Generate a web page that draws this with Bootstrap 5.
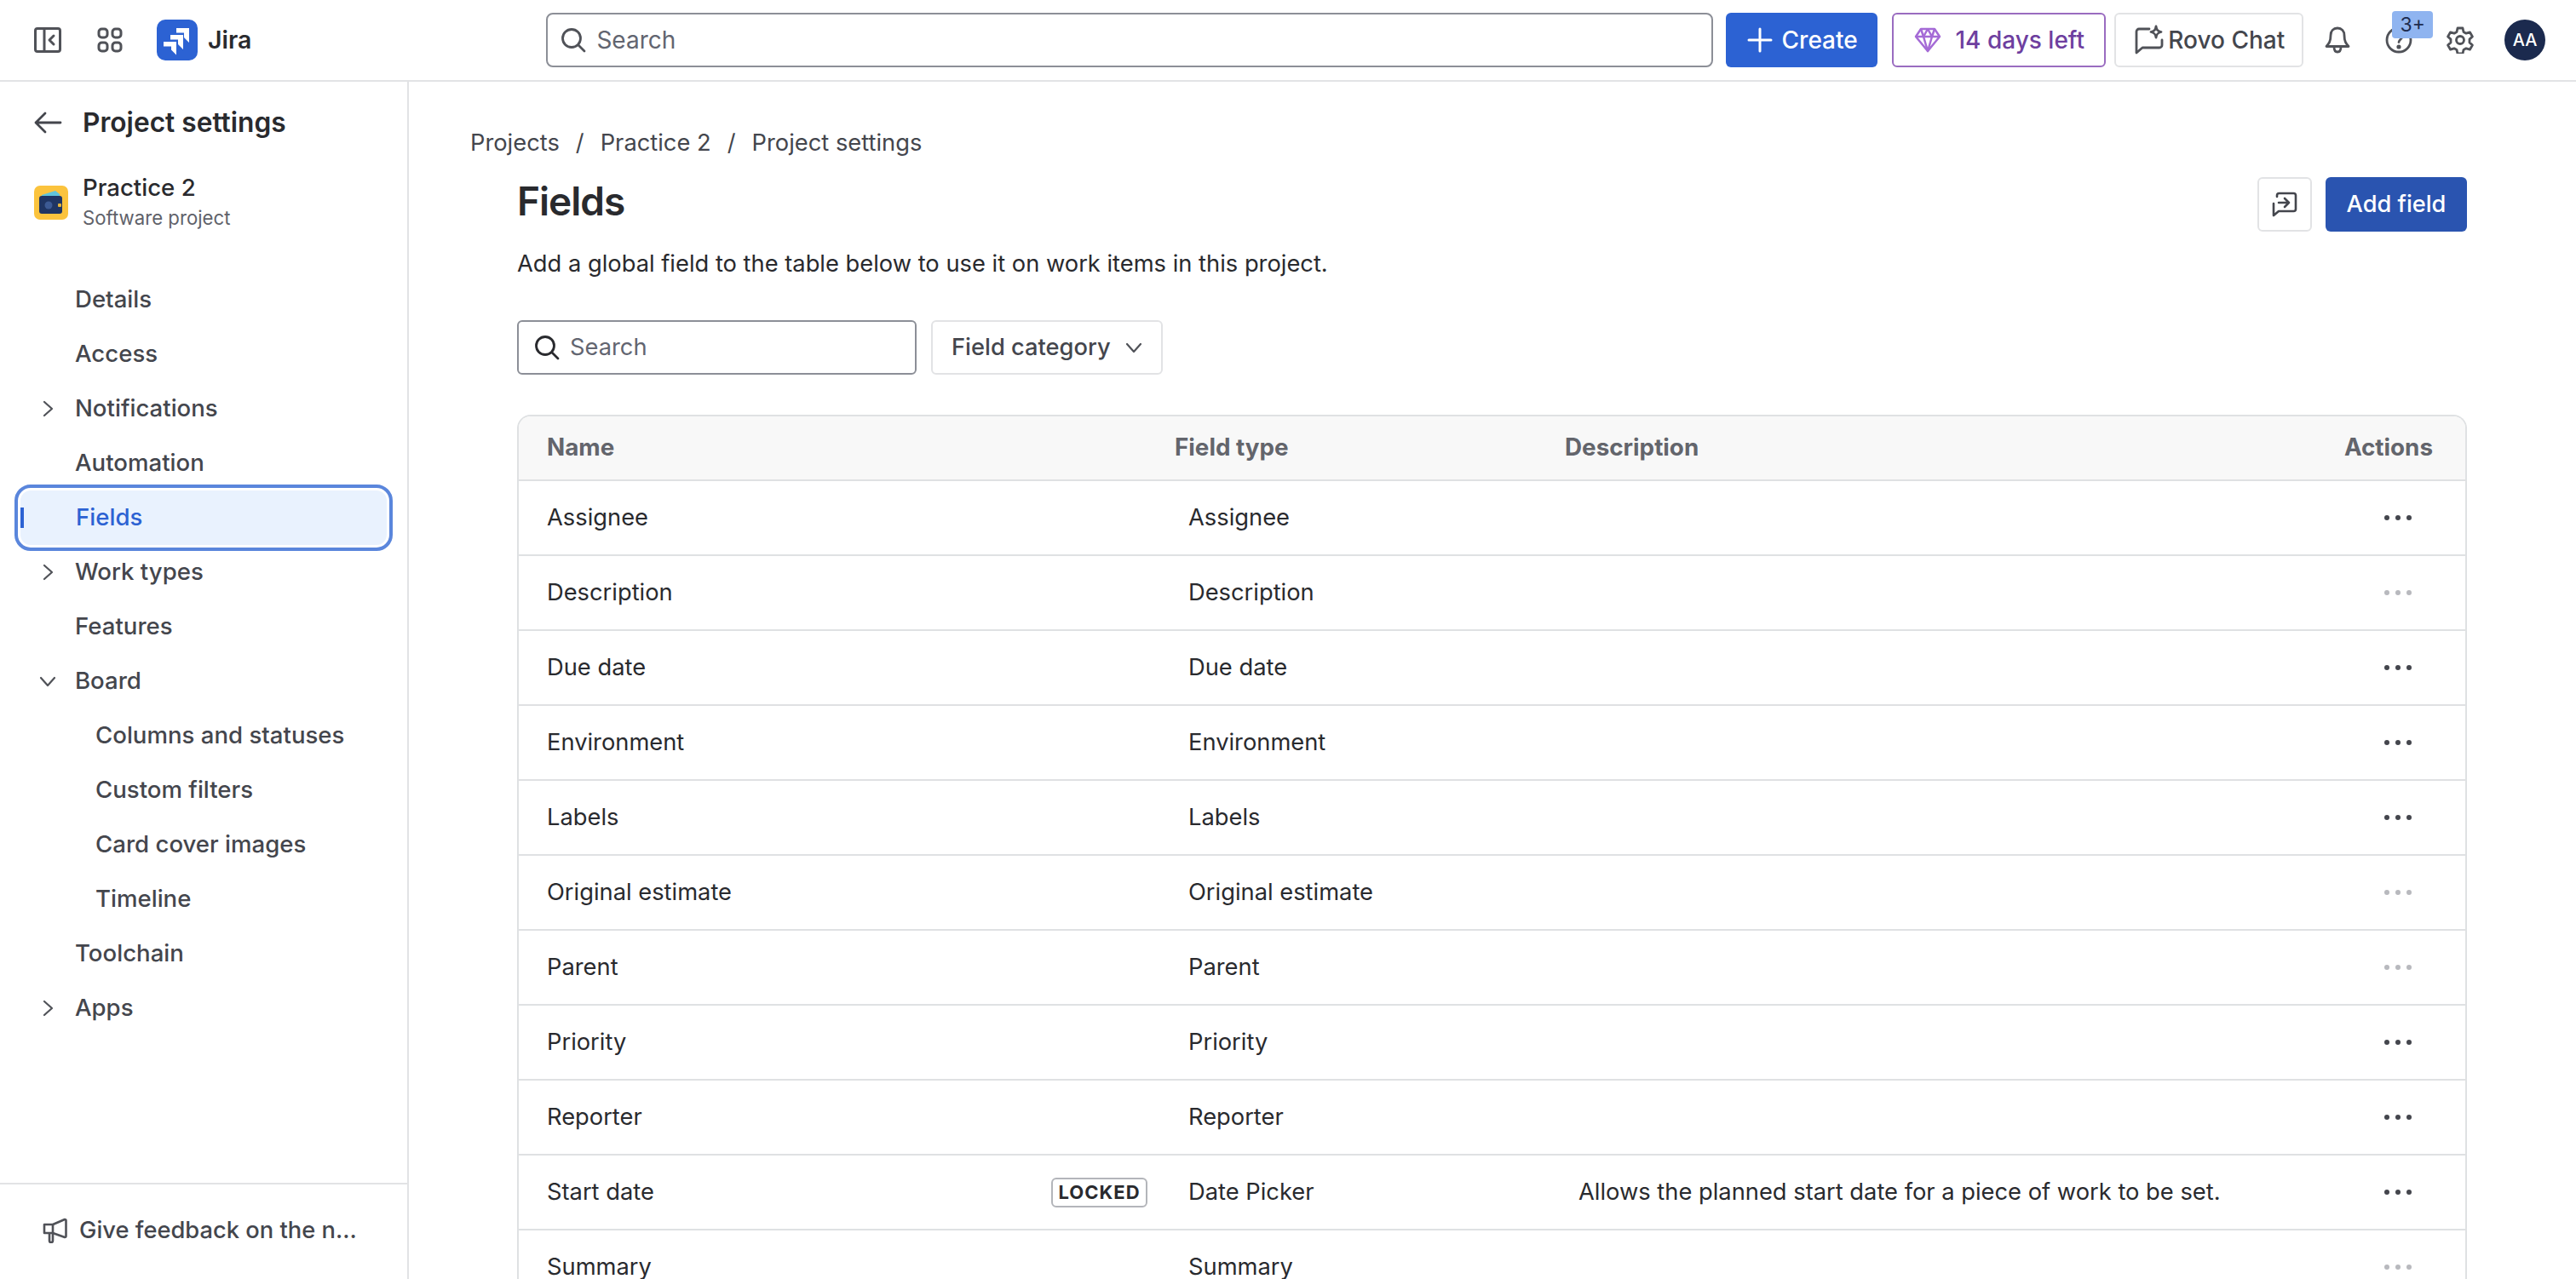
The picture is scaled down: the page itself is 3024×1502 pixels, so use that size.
<!DOCTYPE html>
<html lang="en">
<head>
    <meta charset="UTF-8">
    <title>Fields - Project settings - Jira</title>
    <link href="https://cdn.jsdelivr.net/npm/bootstrap@5.3.0/dist/css/bootstrap.min.css" rel="stylesheet">
    <style>
        html, body { height: 100%; }
        body {
            font-family: "Inter", "Liberation Sans", sans-serif;
            font-size: 27.3px;
            color: #292a2e;
            overflow: hidden;
        }
        svg { flex-shrink: 0; display: block; }

        .topbar { height: 96px; border-bottom: 2px solid #e2e3e5; padding: 0 36px 0 40px; }
        .logo-wrap { margin-left: 40px; }
        .apps-wrap { margin-left: 42px; }
        .logo-text { font-size: 28.5px; font-weight: 600; margin-left: 12px; }
        .global-search { width: 1370px; height: 64px; margin-left: 346px; border: 2px solid #8c8f97; border-radius: 8px; padding: 0 15px; color: #626570; font-size: 28px; }
        .tb-btn { height: 64px; border-radius: 6px; font-size: 28px; font-weight: 500; display: flex; align-items: center; padding: 0; }
        .btn-create { width: 179px; margin-left: 15px; background: #2c62d3; color: #fff; gap: 11px; padding-left: 24px; }
        .btn-create:hover { background: #2c62d3; color: #fff; }
        .btn-trial { width: 251px; margin-left: 17px; border: 2px solid #9a6cc0; color: #6e3f9f; gap: 16px; padding-left: 24px; }
        .btn-rovo { width: 222px; margin-left: 10px; border: 2px solid #e2e3e5; color: #44464d; gap: 5px; padding-left: 22px; }
        .tb-icon { width: 72px; height: 64px; display: flex; align-items: center; justify-content: center; position: relative; }
        .tb-icon.first-icon { margin-left: 4px; }
        .notif-count { position: absolute; left: 28px; top: -2px; width: 48px; height: 32px; background: #8fb4f0; border-radius: 4px; font-size: 23px; line-height: 32px; text-align: center; color: #1e2c4f; }
        .user-avatar { width: 48px; height: 48px; border-radius: 50%; background: #1b2a4e; color: #fff; font-size: 20px; font-weight: 500; display: flex; align-items: center; justify-content: center; margin-left: 16px; }

        .app-body { height: calc(100% - 96px); }
        .side-panel { width: 480px; border-right: 2px solid #e2e3e5; flex-shrink: 0; }
        .side-title { height: 96px; padding-left: 40px; font-size: 31.7px; font-weight: 600; gap: 24px; }
        .side-project { padding-left: 40px; gap: 17px; height: 76px; margin-top: 8px; }
        .proj-icon { width: 40px; height: 40px; }
        .proj-name { font-size: 27.6px; font-weight: 500; line-height: 36px; }
        .proj-type { font-size: 22.2px; color: #5f626a; line-height: 36px; }
        .side-nav { padding: 0 18px; margin-top: 44px; }
        .side-link { height: 64px; display: flex; align-items: center; color: #44464d; font-size: 27.6px; font-weight: 500; padding: 0 0 0 70px; position: relative; }
        .side-link:hover { color: #44464d; }
        .side-link.sub-link { padding-left: 94px; }
        .side-link svg { position: absolute; left: 27px; top: 21px; }
        .side-link.is-current { color: #2c62d3; background: #e9f2fe; border-radius: 12px; outline: 4px solid #5a86dc; outline-offset: 3px; margin: 0 6px; padding-left: 65px; }
        .side-link.is-current::before { content: ""; position: absolute; left: 0; top: 20px; width: 4px; height: 24px; background: #2c62d3; }
        .side-foot { height: 113px; border-top: 2px solid #e2e3e5; padding-left: 50px; color: #44464d; font-weight: 500; gap: 14px; padding-bottom: 3px; }

        .main-area { padding: 54px 128px 0 72px; min-width: 0; }
        .crumbs { color: #44464d; line-height: 36px; }
        .crumbs .sep { margin: 0 19px; }
        .page-wrap { padding-left: 55px; }
        .page-title { font-size: 46px; font-weight: 600; letter-spacing: -1px; line-height: 64px; margin: 0; }
        .page-head { margin-top: 18px; }
        .page-desc { margin: 24px 0 0; line-height: 36px; }
        .head-actions { margin-top: 4px; }
        .btn-side { width: 64px; height: 64px; border: 2px solid #e2e3e5; border-radius: 6px; display: flex; align-items: center; justify-content: center; padding: 0; }
        .btn-add { width: 166px; height: 64px; background: #2a54b0; color: #fff; font-size: 27.2px; font-weight: 500; border-radius: 6px; padding: 0; margin-left: 16px; }
        .btn-add:hover { background: #2a54b0; color: #fff; }
        .filter-row { margin-top: 48px; gap: 17px; }
        .field-search { width: 469px; height: 64px; border: 2px solid #8c8f97; border-radius: 6px; padding: 0 18px; color: #626570; gap: 12px; }
        .btn-cat { width: 272px; height: 64px; border: 2px solid #e2e3e5; border-radius: 6px; color: #44464d; font-size: 27.3px; font-weight: 500; gap: 16px; display: flex; align-items: center; padding: 0 0 0 22px; }

        .fields-wrap { margin-top: 47px; border: 2px solid #dfe1e3; border-bottom: 0; border-radius: 16px 16px 0 0; overflow: hidden; }
        .fields-table { margin: 0; table-layout: fixed; width: 100%; --bs-table-color: #292a2e; font-size: 27.3px; }
        .fields-table th { height: 75px; background: #f8f8f8; color: #63656c; font-weight: 700; border-bottom: 2px solid #dfe1e3; padding: 0; vertical-align: middle; font-size: 27.8px; box-shadow: none; }
        .fields-table td { height: 88px; border-bottom: 2px solid #dfe1e3; padding: 0; vertical-align: middle; }
        .col-name { width: 770px; }
        .col-type { width: 458px; }
        .col-act { width: 156px; }
        .pad-name { padding-left: 33px !important; }
        .pad-type { padding-left: 16px !important; }
        .pad-desc { padding-left: 16px !important; }
        .th-act { text-align: right; padding-right: 38px !important; }
        .name-cell { display: flex; align-items: center; justify-content: space-between; padding-right: 32px; }
        .tag-locked { height: 35px; width: 113px; border: 2px solid #b3b5ba; border-radius: 6px; font-size: 22px; font-weight: 700; letter-spacing: 1px; line-height: 31px; text-align: center; }
        .dot-row { display: flex; gap: 7px; justify-content: center; width: 32px; margin-left: 61px; }
        .dot-row i { width: 6px; height: 6px; border-radius: 50%; background: #44464d; display: block; }
        .dot-row.is-off i { background: #b8b9be; }
    </style>
</head>
<body>
    <header class="topbar d-flex align-items-center">
        <!-- sidebar toggle -->
        <svg width="32" height="30" viewBox="0 0 32 30" fill="none" stroke="#505258" stroke-width="3"><rect x="1.500" y="1.500" width="29" height="27" rx="2.500"/><path d="M12 2v26"/><path d="M23 10l-5 5 5 5" stroke-linecap="round" stroke-linejoin="round"/></svg>
        <svg class="apps-wrap" width="30" height="30" viewBox="0 0 30 30" fill="none" stroke="#505258" stroke-width="3"><rect x="2" y="2" width="10" height="10" rx="3.500"/><rect x="18" y="2" width="10" height="10" rx="3.500"/><rect x="2" y="18" width="10" height="10" rx="3.500"/><rect x="18" y="18" width="10" height="10" rx="3.500"/></svg>
        <svg class="logo-wrap" width="48" height="48" viewBox="0 0 48 48"><rect width="48" height="48" rx="10" fill="#2c62d3"/><path fill="#fff" d="M23 10h15v17l-6-6v-5.500H23zM16 18h15v17l-6-6v-5.500h-9zM8 26h15v15.500l-6-6V31.500H8z"/></svg>
        <span class="logo-text">Jira</span>

        <div class="global-search d-flex align-items-center gap-2">
            <svg width="30" height="30" viewBox="0 0 30 30" fill="none" stroke="#505258" stroke-width="2.800"><circle cx="13" cy="13" r="10.500"/><path d="M21 21l7 7" stroke-linecap="round"/></svg>
            <span class="ms-1">Search</span>
        </div>
        <button class="btn tb-btn btn-create">
            <svg width="30" height="30" viewBox="0 0 30 30" stroke="#fff" stroke-width="3" stroke-linecap="round"><path d="M15 2v26M2 15h26"/></svg>
            Create
        </button>
        <button class="btn tb-btn btn-trial">
            <svg width="32" height="30" viewBox="0 0 32 30" fill="none" stroke="#a56bd6" stroke-width="2.500" stroke-linejoin="round"><path d="M8 2h16l6 9-14 17L2 11z"/><path d="M2 11h28M11 11l5 17 5-17M8 2l3 9M24 2l-3 9M16 2l-5 9M16 2l5 9"/></svg>
            14 days left
        </button>
        <button class="btn tb-btn btn-rovo">
            <svg width="34" height="36" viewBox="0 0 34 36" fill="none" stroke="#505258" stroke-width="2.800" stroke-linejoin="round"><path d="M17 5H5a3 3 0 0 0-3 3v25l7-6h20a3 3 0 0 0 3-3v-6" stroke-linecap="round"/><path d="M25 2c.6 4 1.800 5.400 6 6.500-4.200 1-5.400 2.500-6 6.500-.6-4-1.800-5.500-6-6.500 4.200-1.100 5.400-2.500 6-6.500z"/></svg>
            Rovo Chat
        </button>
        <div class="tb-icon first-icon">
            <svg width="30" height="32" viewBox="0 0 30 32" fill="none" stroke="#505258" stroke-width="2.800" stroke-linejoin="round"><path d="M15 2c-5 0-8 3.500-8 8.500 0 7-2 9.500-5 13h26c-3-3.500-5-6-5-13C23 5.500 20 2 15 2z"/><path d="M11 24c0 4 1.500 6 4 6s4-2 4-6"/></svg>
        </div>
        <div class="tb-icon">
            <svg width="32" height="32" viewBox="0 0 32 32" fill="none" stroke="#505258" stroke-width="2.800"><circle cx="16" cy="16" r="14"/><path d="M12 12c0-2.500 2-4 4-4s4 1.500 4 4c0 3-4 3.500-4 6.500" stroke-linecap="round"/><circle cx="16" cy="24" r="1.200" fill="#505258"/></svg>
            <span class="notif-count">3+</span>
        </div>
        <div class="tb-icon">
            <svg width="32" height="32" viewBox="0 0 32 32" fill="none" stroke="#505258" stroke-width="2.800" stroke-linejoin="round"><path d="M13 2h6l1 4.500 3 1.700 4.400-1.400 3 5.200-3.400 3.100v3.800l3.400 3.100-3 5.200-4.400-1.400-3 1.700-1 4.500h-6l-1-4.500-3-1.700-4.400 1.400-3-5.200 3.400-3.100v-3.800L1.600 12l3-5.200L9 8.200l3-1.700z"/><circle cx="16" cy="16" r="4.500"/></svg>
        </div>
        <div class="user-avatar">AA</div>
    </header>

    <div class="app-body d-flex">
        <aside class="side-panel d-flex flex-column">
            <div class="side-title d-flex align-items-center">
                <svg width="33" height="26" viewBox="0 0 33 26" fill="none" stroke="#44464d" stroke-width="2.800" stroke-linecap="round" stroke-linejoin="round"><path d="M31 13H2M13 2L2 13l11 11"/></svg>
                <span>Project settings</span>
            </div>
            <div class="side-project d-flex align-items-center">
                <svg class="proj-icon" viewBox="0 0 40 40"><rect width="40" height="40" rx="7" fill="#fbc33d"/><path d="M9 11l16-5 5 4v4H9z" fill="#5fc4dc"/><rect x="6" y="12" width="27" height="21" rx="3" fill="#1f3563"/><circle cx="17" cy="23" r="4.500" fill="#3c5a94"/><rect x="28" y="21" width="4" height="4" rx="1" fill="#e4b43a"/></svg>
                <div>
                    <div class="proj-name">Practice 2</div>
                    <div class="proj-type">Software project</div>
                </div>
            </div>
            <nav class="side-nav flex-grow-1">
                <a class="side-link text-decoration-none" href="#">Details</a>
                <a class="side-link text-decoration-none" href="#">Access</a>
                <a class="side-link text-decoration-none" href="#"><svg width="22" height="22" viewBox="0 0 22 22" fill="none" stroke="#505258" stroke-width="2.200" stroke-linecap="round" stroke-linejoin="round"><path d="M7 3l9 8-9 8"/></svg>Notifications</a>
                <a class="side-link text-decoration-none" href="#">Automation</a>
                <a class="side-link text-decoration-none is-current" href="#">Fields</a>
                <a class="side-link text-decoration-none" href="#"><svg width="22" height="22" viewBox="0 0 22 22" fill="none" stroke="#505258" stroke-width="2.200" stroke-linecap="round" stroke-linejoin="round"><path d="M7 3l9 8-9 8"/></svg>Work types</a>
                <a class="side-link text-decoration-none" href="#">Features</a>
                <a class="side-link text-decoration-none" href="#"><svg width="22" height="22" viewBox="0 0 22 22" fill="none" stroke="#505258" stroke-width="2.200" stroke-linecap="round" stroke-linejoin="round"><path d="M3 7l8 9 8-9"/></svg>Board</a>
                <a class="side-link sub-link text-decoration-none" href="#">Columns and statuses</a>
                <a class="side-link sub-link text-decoration-none" href="#">Custom filters</a>
                <a class="side-link sub-link text-decoration-none" href="#">Card cover images</a>
                <a class="side-link sub-link text-decoration-none" href="#">Timeline</a>
                <a class="side-link text-decoration-none" href="#">Toolchain</a>
                <a class="side-link text-decoration-none" href="#"><svg width="22" height="22" viewBox="0 0 22 22" fill="none" stroke="#505258" stroke-width="2.200" stroke-linecap="round" stroke-linejoin="round"><path d="M7 3l9 8-9 8"/></svg>Apps</a>
            </nav>
            <div class="side-foot d-flex align-items-center">
                <svg width="29" height="30" viewBox="0 0 29 30" fill="none" stroke="#505258" stroke-width="2.600" stroke-linejoin="round"><path d="M2 8h10L26 2c1 0 1.500.5 1.500 1.500v18c0 1-.5 1.500-1.500 1.500L12 18H2z"/><path d="M8 18v9a2 2 0 0 0 4 0v-9M12 8v10"/></svg>
                <span>Give feedback on the n...</span>
            </div>
        </aside>

        <main class="main-area flex-grow-1">
            <div class="crumbs">Projects<span class="sep">/</span>Practice 2<span class="sep">/</span>Project settings</div>
            <div class="page-wrap">
                <div class="page-head d-flex justify-content-between align-items-start">
                    <div>
                        <h1 class="page-title">Fields</h1>
                        <p class="page-desc">Add a global field to the table below to use it on work items in this project.</p>
                    </div>
                    <div class="head-actions d-flex">
                        <button class="btn btn-side">
                            <svg width="30" height="30" viewBox="0 0 30 30" fill="none" stroke="#44464d" stroke-width="2.600" stroke-linecap="round" stroke-linejoin="round"><path d="M6 6V4.500A2.500 2.500 0 0 1 8.500 2h17A2.500 2.500 0 0 1 28 4.500v16a2.500 2.500 0 0 1-2.500 2.500H8l-6 5V14"/><path d="M8 13h12M15 8l5 5-5 5"/></svg>
                        </button>
                        <button class="btn btn-add">Add field</button>
                    </div>
                </div>
                <div class="filter-row d-flex">
                    <div class="field-search d-flex align-items-center">
                        <svg width="30" height="30" viewBox="0 0 30 30" fill="none" stroke="#292a2e" stroke-width="2.800"><circle cx="13" cy="13" r="10.500"/><path d="M21 21l7 7" stroke-linecap="round"/></svg>
                        <span>Search</span>
                    </div>
                    <button class="btn btn-cat">
                        Field category
                        <svg width="22" height="22" viewBox="0 0 22 22" fill="none" stroke="#505258" stroke-width="2.200" stroke-linecap="round" stroke-linejoin="round"><path d="M3 7l8 9 8-9"/></svg>
                    </button>
                </div>
                <div class="fields-wrap">
                    <table class="table fields-table">
                        <colgroup><col class="col-name"><col class="col-type"><col><col class="col-act"></colgroup>
                        <thead>
                            <tr><th class="pad-name">Name</th><th>Field type</th><th>Description</th><th class="th-act">Actions</th></tr>
                        </thead>
                        <tbody id="rows"></tbody>
                    </table>
                </div>
            </div>
        </main>
    </div>

    <script>
        const campos = [
            ['Assignee', 'Assignee', '', false],
            ['Description', 'Description', '', true],
            ['Due date', 'Due date', '', false],
            ['Environment', 'Environment', '', false],
            ['Labels', 'Labels', '', false],
            ['Original estimate', 'Original estimate', '', true],
            ['Parent', 'Parent', '', true],
            ['Priority', 'Priority', '', false],
            ['Reporter', 'Reporter', '', false],
            ['Start date', 'Date Picker', 'Allows the planned start date for a piece of work to be set.', false, true],
            ['Summary', 'Summary', '', true]
        ];
        document.getElementById('rows').innerHTML = campos.map(c => `
            <tr>
                <td class="pad-name"><div class="name-cell"><span>${c[0]}</span>${c[4] ? '<span class="tag-locked">LOCKED</span>' : ''}</div></td>
                <td class="pad-type">${c[1]}</td>
                <td class="pad-desc">${c[2]}</td>
                <td><div class="dot-row ${c[3] ? 'is-off' : ''}"><i></i><i></i><i></i></div></td>
            </tr>`).join('');
    </script>
    <script src="https://cdn.jsdelivr.net/npm/bootstrap@5.3.0/dist/js/bootstrap.bundle.min.js"></script>
</body>
</html>
